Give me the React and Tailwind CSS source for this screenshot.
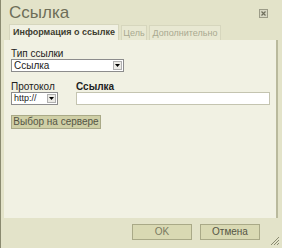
export default function App() {
  return (
    <div className="w-[282px] h-[248px] bg-[#e3e3c9] flex flex-col relative font-['Liberation_Sans',sans-serif] border-l border-[#8a8a70] overflow-hidden whitespace-nowrap">
      {/* Title */}
      <div className="h-[24px] shrink-0 pl-[8px] pt-[3px] text-[17px] leading-[20px] text-[#6e6e58]">Ссылка</div>
      <div className="absolute right-[14px] top-[9px] w-[9px] h-[9px] border border-[#9c9c88] bg-[#d8d8c4] flex items-center justify-center">
        <svg width="5" height="5" viewBox="0 0 5 5">
          <path d="M0.5 0.5L4.5 4.5M4.5 0.5L0.5 4.5" stroke="#6f6f5c" strokeWidth="1.2" />
        </svg>
      </div>

      {/* Tabs */}
      <div className="flex shrink-0 items-end pl-[8px] gap-[2px] h-[16px]">
        <div className="w-[110px] h-[16px] bg-[#f1f1e3] border border-b-0 border-[#d6d6bd] text-[9px] font-bold leading-[15px] text-center text-[#3d3d30]">
          Информация о ссылке
        </div>
        <div className="w-[26px] h-[15px] bg-[#e8e8d2] border border-b-0 border-[#d6d6bd] text-[9px] leading-[14px] text-center text-[#a8a890]">Цель</div>
        <div className="w-[72px] h-[15px] bg-[#e8e8d2] border border-b-0 border-[#d6d6bd] text-[9px] leading-[14px] text-center text-[#a8a890]">Дополнительно</div>
      </div>

      {/* Panel */}
      <div className="flex-1 bg-[#f1f1e3] ml-[3px] mr-[4px] border-r-2 border-[#b9b99c] pl-[7px] pr-[6px] pt-[9px] flex flex-col text-[10px] text-[#222]">
        <div className="leading-[10px]">Тип ссылки</div>
        <div className="w-[113px] h-[13px] bg-white border border-[#8c8c8c] flex items-center justify-between pl-[2px] pr-[1px]">
          <span className="leading-[11px]">Ссылка</span>
          <Arrow />
        </div>

        <div className="flex gap-[18px] mt-[10px]">
          <div className="flex flex-col">
            <div className="leading-[10px]">Протокол</div>
            <div className="w-[47px] h-[13px] bg-white border border-[#8c8c8c] flex items-center justify-between pl-[2px] pr-[1px]">
              <span className="leading-[11px] text-[9px]">http://</span>
              <Arrow />
            </div>
          </div>
          <div className="flex flex-col flex-1">
            <div className="leading-[10px] font-bold">Ссылка</div>
            <div className="h-[13px] bg-white border border-[#c4c4b0]" />
          </div>
        </div>

        <div className="mt-[10px] w-[90px] h-[14px] bg-[#cfcfa6] border border-[#a9a987] text-[#555545] leading-[12px] text-center">
          Выбор на сервере
        </div>
      </div>

      {/* Footer */}
      <div className="h-[30px] shrink-0 flex items-start pt-[6px] justify-end gap-[8px] pr-[22px] relative">
        <div className="w-[60px] h-[16px] bg-[#d9d9b3] border border-[#a9a987] text-[10px] leading-[14px] text-center text-[#7a7a62]">OK</div>
        <div className="w-[60px] h-[16px] bg-[#d9d9b3] border border-[#a9a987] text-[10px] leading-[14px] text-center text-[#555545]">Отмена</div>
        <svg className="absolute right-[2px] bottom-[2px]" width="12" height="12" viewBox="0 0 12 12">
          <path d="M11 3L3 11M11 6L6 11M11 9L9 11" stroke="#8a8a70" strokeWidth="1" />
        </svg>
      </div>
    </div>
  );
}

function Arrow() {
  return (
    <div className="w-[9px] h-[9px] bg-[#ecebe6] border border-[#b0b0b0] flex items-center justify-center">
      <svg width="5" height="3" viewBox="0 0 5 3">
        <path d="M0 0H5L2.5 3Z" fill="#000" />
      </svg>
    </div>
  );
}
